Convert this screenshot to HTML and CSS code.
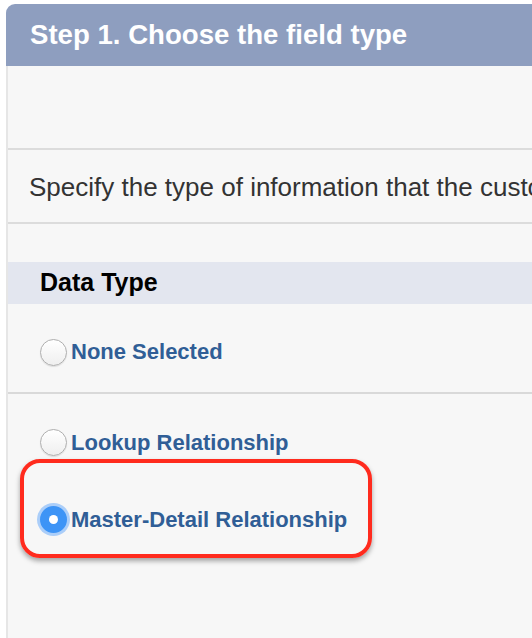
FILE: index.html
```html
<!DOCTYPE html>
<html>
<head>
<meta charset="utf-8">
<link rel="stylesheet" href="styles.css">
</head>
<body>
<div class="wizard">
  <div class="wizard-header">Step 1. Choose the field type</div>
  <div class="panel">
    <div class="blank-top"></div>
    <div class="intro">Specify the type of information that the custom field will contain.</div>
    <div class="blank-mid"></div>
    <div class="section-band">Data Type</div>
    <div class="option option-none">
      <span class="radio"></span>
      <span class="label">None Selected</span>
    </div>
    <div class="option option-lookup">
      <span class="radio"></span>
      <span class="label">Lookup Relationship</span>
    </div>
    <div class="highlight">
      <div class="option option-master">
        <span class="radio radio-on"></span>
        <span class="label">Master-Detail Relationship</span>
      </div>
    </div>
  </div>
</div>
</body>
</html>
```

FILE: styles.css
```css
html, body {
  margin: 0;
  padding: 0;
  background: #ffffff;
  height: 100%;
  overflow: hidden;
}

body {
  font-family: "Liberation Sans", Arial, sans-serif;
}

.wizard {
  margin: 4px 0 0 6px;
  height: 634px;
  display: flex;
  flex-direction: column;
}

.wizard-header {
  height: 62px;
  line-height: 62px;
  background: #8e9ebf;
  border-top-left-radius: 9px;
  color: #ffffff;
  font-weight: bold;
  font-size: 27.6px;
  padding-left: 24px;
  white-space: nowrap;
}

.panel {
  flex: 1;
  background: #f7f7f7;
  border-left: 2px solid #e6e6e6;
  overflow: hidden;
}

.blank-top {
  height: 82px;
  border-bottom: 2px solid #dcdcdc;
}

.intro {
  height: 69px;
  padding-top: 3px;
  line-height: 69px;
  font-size: 26px;
  color: #333333;
  padding-left: 21px;
  white-space: nowrap;
  border-bottom: 2px solid #dcdcdc;
}

.blank-mid {
  height: 38px;
}

.section-band {
  height: 42px;
  line-height: 40px;
  padding-bottom: 2px;
  box-sizing: border-box;
  background: #e3e6ef;
  font-weight: bold;
  font-size: 25px;
  color: #000000;
  padding-left: 32px;
}

.option {
  display: flex;
  align-items: center;
  gap: 4px;
  padding-left: 32px;
}

.option-none {
  height: 90px;
  padding-top: 8px;
  box-sizing: border-box;
  border-bottom: 2px solid #d9d9d9;
}

.option-lookup {
  padding-top: 35px;
}

.label {
  font-weight: bold;
  font-size: 22px;
  color: #305e96;
  white-space: nowrap;
}

.radio {
  width: 27px;
  height: 27px;
  box-sizing: border-box;
  border-radius: 50%;
  border: 1px solid #aeaeae;
  background: linear-gradient(#ffffff, #efefef);
  box-shadow: inset 0 1px 1px rgba(255,255,255,0.9), 0 1px 1px rgba(0,0,0,0.1);
  flex: none;
  display: flex;
  align-items: center;
  justify-content: center;
}

.radio-on {
  border: none;
  background: #3d94f6;
  box-shadow: 0 0 0 3px rgba(120, 178, 250, 0.6);
}

.radio-on::after {
  content: "";
  width: 9px;
  height: 9px;
  border-radius: 50%;
  background: #ffffff;
}

.highlight {
  margin: 3px 0 0 12px;
  width: 352px;
  height: 99px;
  box-sizing: border-box;
  border: 4px solid #ff2b1e;
  border-radius: 20px;
  box-shadow: 0 3px 5px rgba(0, 0, 0, 0.35);
}

.option-master {
  padding-top: 43px;
  padding-left: 16px;
}
```
